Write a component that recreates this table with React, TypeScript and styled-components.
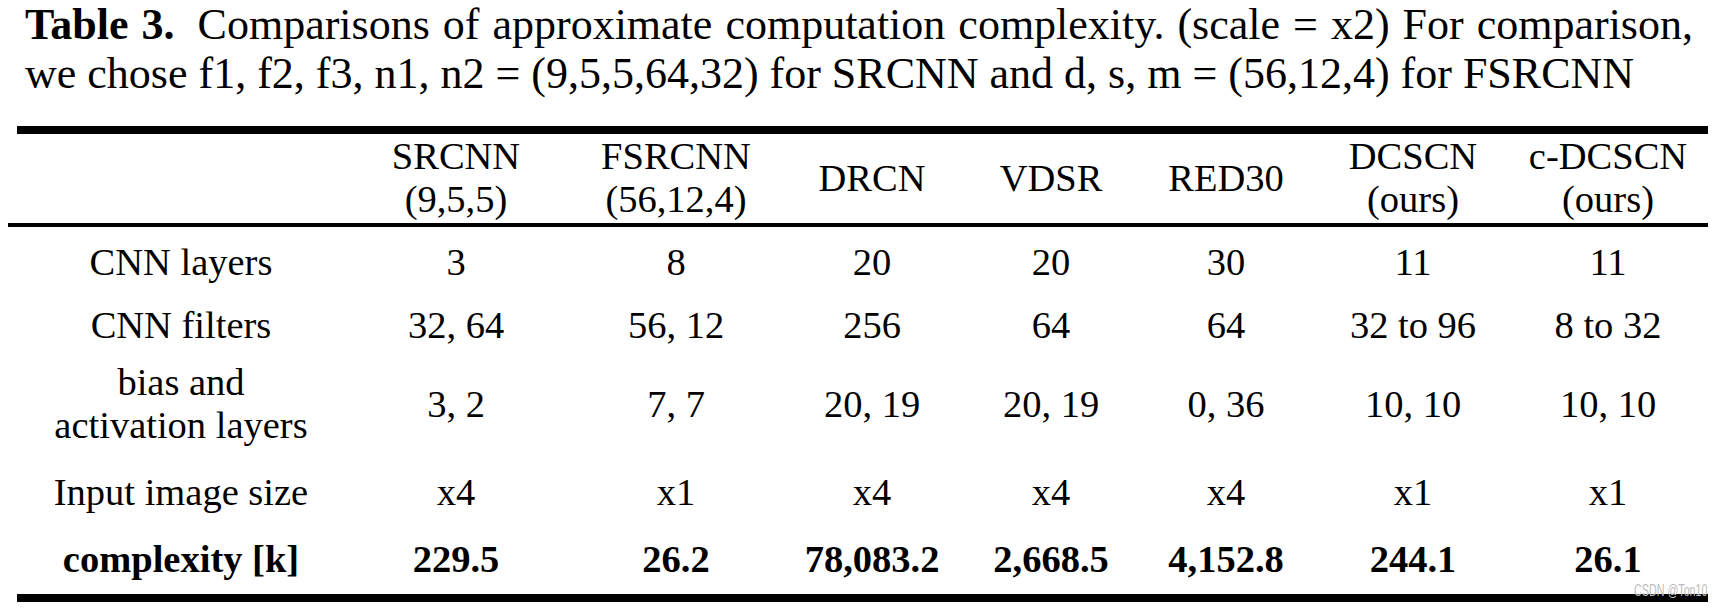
import React from "react";
import styled, {createGlobalStyle} from "styled-components";

const GlobalStyle = createGlobalStyle`
  html, body {
    margin: 0;
    padding: 0;
    background: #fff;
  }
  body {
    font-family: "Liberation Serif", "Times New Roman", serif;
    color: #000;
  }
`;

const Page = styled.div`
  position: relative;
  width: 1724px;
  height: 608px;
  overflow: hidden;
`;

const Caption = styled.div`
  margin-left: 25px;
  width: 1668px;
  font-size: 44px;
`;
const CaptionLine = styled.div<{$justify?: boolean; $lh: number}>`
  line-height: ${props => props.$lh}px;
  white-space: nowrap;
  text-align: ${props => (props.$justify ? "justify" : "left")};
  text-align-last: ${props => (props.$justify ? "justify" : "left")};
`;
const Label = styled.b`
  margin-right: 10px;
`;

const Table = styled.div`
  margin: 28px 0 0 17px;
  width: 1691px;
  font-size: 38.5px;
  line-height: 43px;
`;
const Rule = styled.div<{$thick: number; $bleed?: number}>`
  height: ${props => props.$thick}px;
  margin-left: ${props => -(props.$bleed || 0)}px;
  background: #000;
`;
const Row = styled.div<{$pt: number; $pb: number}>`
  display: grid;
  grid-template-columns: 328px 222px 218px 174px 184px 166px 208px 1fr;
  align-items: center;
  text-align: center;
  padding: ${props => props.$pt}px 9px ${props => props.$pb}px 0;
`;
const Cell = styled.div<{$bold?: boolean}>`
  font-weight: ${props => (props.$bold ? 700 : 400)};
  white-space: nowrap;
`;

const Watermark = styled.div`
  position: absolute;
  right: 17px;
  top: 582px;
  font-family: "Liberation Sans", "DejaVu Sans", sans-serif;
  font-size: 17px;
  line-height: 18px;
  color: #bdbdbd;
  transform: scaleX(0.63);
  transform-origin: right top;
  white-space: nowrap;
`;

const columns = [
  ["SRCNN", "(9,5,5)"],
  ["FSRCNN", "(56,12,4)"],
  ["DRCN"],
  ["VDSR"],
  ["RED30"],
  ["DCSCN", "(ours)"],
  ["c-DCSCN", "(ours)"]
];

const rows = [
  {label: ["CNN layers"], values: ["3", "8", "20", "20", "30", "11", "11"], pt: 14, pb: 10},
  {label: ["CNN filters"], values: ["32, 64", "56, 12", "256", "64", "64", "32 to 96", "8 to 32"], pt: 10, pb: 7},
  {
    label: ["bias and", "activation layers"],
    values: ["3, 2", "7, 7", "20, 19", "20, 19", "0, 36", "10, 10", "10, 10"],
    pt: 7,
    pb: 12
  },
  {label: ["Input image size"], values: ["x4", "x1", "x4", "x4", "x4", "x1", "x1"], pt: 12, pb: 12},
  {
    label: ["complexity [k]"],
    values: ["229.5", "26.2", "78,083.2", "2,668.5", "4,152.8", "244.1", "26.1"],
    pt: 12,
    pb: 13,
    bold: true
  }
];

const lines = (parts: string[]) =>
  parts.map((text, index) => <div key={index}>{text}</div>);

const App = () => {
  return (
    <Page>
      <GlobalStyle />
      <Caption>
        <CaptionLine $justify $lh={49}>
          <Label>Table 3.</Label> Comparisons of approximate computation complexity. (scale = x2) For comparison,
        </CaptionLine>
        <CaptionLine $lh={49}>
          we chose f1, f2, f3, n1, n2 = (9,5,5,64,32) for SRCNN and d, s, m = (56,12,4) for FSRCNN
        </CaptionLine>
      </Caption>
      <Table>
        <Rule $thick={8} />
        <Row $pt={1} $pb={2}>
          <Cell />
          {columns.map((col, index) => (
            <Cell key={index}>{lines(col)}</Cell>
          ))}
        </Row>
        <Rule $thick={4} $bleed={9} />
        {rows.map((row, index) => (
          <Row key={index} $pt={row.pt} $pb={row.pb}>
            <Cell $bold={row.bold}>{lines(row.label)}</Cell>
            {row.values.map((value, i) => (
              <Cell key={i} $bold={row.bold}>
                {value}
              </Cell>
            ))}
          </Row>
        ))}
        <Rule $thick={8} />
      </Table>
      <Watermark>CSDN @Ton10</Watermark>
    </Page>
  );
};

export default App;
